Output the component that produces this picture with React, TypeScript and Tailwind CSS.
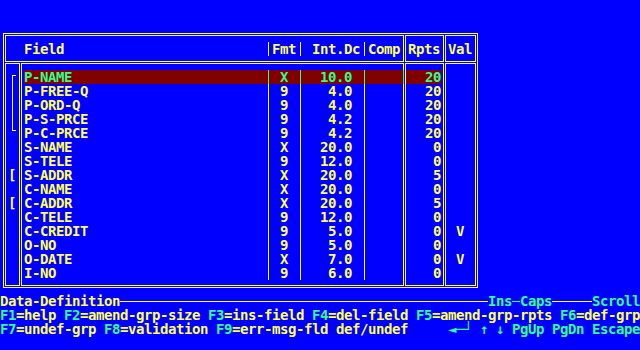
import React from "react";

interface FieldRow {
  name: string;
  fmt: string;
  intDc: string;
  comp: string;
  rpts: string;
  val: string;
}

const fields: FieldRow[] = [
  { name: "P-NAME", fmt: "X", intDc: "10.0", comp: "", rpts: "20", val: "" },
  { name: "P-FREE-Q", fmt: "9", intDc: "4.0", comp: "", rpts: "20", val: "" },
  { name: "P-ORD-Q", fmt: "9", intDc: "4.0", comp: "", rpts: "20", val: "" },
  { name: "P-S-PRCE", fmt: "9", intDc: "4.2", comp: "", rpts: "20", val: "" },
  { name: "P-C-PRCE", fmt: "9", intDc: "4.2", comp: "", rpts: "20", val: "" },
  { name: "S-NAME", fmt: "X", intDc: "20.0", comp: "", rpts: "0", val: "" },
  { name: "S-TELE", fmt: "9", intDc: "12.0", comp: "", rpts: "0", val: "" },
  { name: "S-ADDR", fmt: "X", intDc: "20.0", comp: "", rpts: "5", val: "" },
  { name: "C-NAME", fmt: "X", intDc: "20.0", comp: "", rpts: "0", val: "" },
  { name: "C-ADDR", fmt: "X", intDc: "20.0", comp: "", rpts: "5", val: "" },
  { name: "C-TELE", fmt: "9", intDc: "12.0", comp: "", rpts: "0", val: "" },
  { name: "C-CREDIT", fmt: "9", intDc: "5.0", comp: "", rpts: "0", val: "V" },
  { name: "O-NO", fmt: "9", intDc: "5.0", comp: "", rpts: "0", val: "" },
  { name: "O-DATE", fmt: "X", intDc: "7.0", comp: "", rpts: "0", val: "V" },
  { name: "I-NO", fmt: "9", intDc: "6.0", comp: "", rpts: "0", val: "" },
];

// cursor row
const selectedIdx = 0;

function Key({ children }: { children: React.ReactNode }) {
  return <span className="text-[#33ff88]">{children}</span>;
}

export default function App() {
  return (
    <div className="w-[640px] h-[350px] overflow-hidden bg-[#0000ff] text-[#ffff55] font-['DejaVu_Sans_Mono',monospace] font-bold text-[14px] tracking-[-0.43px] leading-[14px]">
      {/* field table frame */}
      <div className="ml-[3px] mt-[33px] w-[475px] h-[255px] border border-[#ffff55] p-px">
        <div className="grid grid-cols-[15px_383px_39px_31px] grid-rows-[27px_223px] gap-px h-full">
          {/* header */}
          <div className="col-span-2 border border-[#ffff55] pt-[6px]">
            <div className="ml-[18px] flex h-[14px] whitespace-pre">
              <div className="w-[245px] shrink-0 border-r border-[#ffff55]">Field</div>
              <div className="w-[32px] shrink-0 border-r border-[#ffff55] pl-[3px]">Fmt</div>
              <div className="w-[64px] shrink-0 border-r border-[#ffff55] pl-[11px]">Int.Dc</div>
              <div className="w-[38px] shrink-0 pl-[3px]">Comp</div>
            </div>
          </div>
          <div className="border border-[#ffff55] pt-[6px] pl-[2px]">Rpts</div>
          <div className="border border-[#ffff55] pt-[6px] pl-[2px]">Val</div>

          {/* group markers */}
          <div className="border border-[#ffff55] pt-[6px] flex flex-col">
            <div className="h-[70px]">
              <div className="ml-[6px] mt-[5px] w-[4px] h-[56px] border-l border-y border-[#ffff55]" />
            </div>
            <div className="h-[28px]" />
            <div className="h-[14px] pl-[2px]">[</div>
            <div className="h-[14px]" />
            <div className="h-[14px] pl-[2px]">[</div>
          </div>

          {/* field rows */}
          <div className="border border-[#ffff55] pt-[6px] flex flex-col">
            {fields.map((f, i) => {
              const sel = i === selectedIdx;
              const line = sel ? "border-[#33ff88]" : "border-[#ffff55]";
              return (
                <div
                  key={f.name}
                  className={`ml-[2px] w-[380px] h-[14px] flex whitespace-pre ${
                    sel ? "bg-[#800000] text-[#33ff88]" : ""
                  }`}
                >
                  <div className={`w-[245px] shrink-0 border-r ${line}`}>{f.name}</div>
                  <div className={`w-[32px] shrink-0 border-r ${line} pl-[11px]`}>{f.fmt}</div>
                  <div className={`w-[64px] shrink-0 border-r ${line} pr-[12px] text-right`}>
                    {f.intDc}
                  </div>
                  <div className={`w-[39px] shrink-0 border-r ${line}`}>{f.comp}</div>
                </div>
              );
            })}
          </div>

          {/* repeats */}
          <div className="border border-[#ffff55] pt-[6px] flex flex-col">
            {fields.map((f, i) => (
              <div
                key={f.name}
                className={`w-[35px] h-[14px] text-right ${
                  i === selectedIdx ? "bg-[#800000] text-[#33ff88]" : ""
                }`}
              >
                {f.rpts}
              </div>
            ))}
          </div>

          {/* validation */}
          <div className="border border-[#ffff55] pt-[6px] flex flex-col">
            {fields.map((f) => (
              <div key={f.name} className="h-[14px] pl-[10px]">
                {f.val}
              </div>
            ))}
          </div>
        </div>
      </div>

      {/* status line */}
      <div className="mt-[6px] flex h-[14px] whitespace-pre">
        <span>Data-Definition</span>
        <div className="flex-1 mt-[7px] h-px bg-[#ffff55]" />
        <Key>Ins</Key>
        <div className="w-[8px] mt-[7px] h-px bg-[#33ff88]" />
        <Key>Caps</Key>
        <div className="w-[40px] mt-[7px] h-px bg-[#ffff55]" />
        <Key>Scroll</Key>
      </div>

      {/* function keys */}
      <div className="h-[14px] whitespace-pre">
        <Key>F1</Key>=help <Key>F2</Key>=amend-grp-size <Key>F3</Key>=ins-field{" "}
        <Key>F4</Key>=del-field <Key>F5</Key>=amend-grp-rpts <Key>F6</Key>=def-grp
      </div>
      <div className="h-[14px] flex justify-between whitespace-pre">
        <span>
          <Key>F7</Key>=undef-grp <Key>F8</Key>=validation <Key>F9</Key>=err-msg-fld def/undef
        </span>
        <Key>{"◄─┘ ↑ ↓ PgUp PgDn Escape"}</Key>
      </div>
    </div>
  );
}
